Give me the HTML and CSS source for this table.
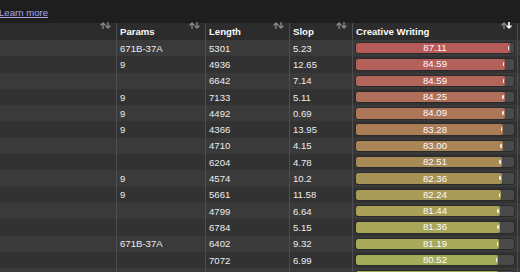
FILE: index.html
```html
<!DOCTYPE html>
<html>
<head>
<meta charset="utf-8">
<link rel="stylesheet" href="styles.css">
</head>
<body>
<div class="top"><a class="learn" href="#">Learn more</a></div>
<div class="table">
  <div class="hcell"><span class="hlabel"></span><svg class="sort" viewBox="0 0 11 7" width="11" height="7"><path d="M3 7V1M1 3L3 1L5 3" class="up"/><path d="M8 0V6M6 4L8 6L10 4" class="down"/></svg></div>
  <div class="hcell"><span class="hlabel">Params</span><svg class="sort" viewBox="0 0 11 7" width="11" height="7"><path d="M3 7V1M1 3L3 1L5 3" class="up"/><path d="M8 0V6M6 4L8 6L10 4" class="down"/></svg></div>
  <div class="hcell"><span class="hlabel">Length</span><svg class="sort" viewBox="0 0 11 7" width="11" height="7"><path d="M3 7V1M1 3L3 1L5 3" class="up"/><path d="M8 0V6M6 4L8 6L10 4" class="down"/></svg></div>
  <div class="hcell"><span class="hlabel">Slop</span><svg class="sort" viewBox="0 0 11 7" width="11" height="7"><path d="M3 7V1M1 3L3 1L5 3" class="up"/><path d="M8 0V6M6 4L8 6L10 4" class="down"/></svg></div>
  <div class="hcell"><span class="hlabel">Creative Writing</span><svg class="sort" viewBox="0 0 11 7" width="11" height="7"><path d="M3 7V1M1 3L3 1L5 3" class="up"/><path d="M8 0V6M6 4L8 6L10 4" class="down active"/></svg></div>
  <div class="hcell last"></div>
</div>
<div class="table body" id="body"></div>
<script>
var rows=[
["671B-37A","5301","5.23","87.11",97.5,"#b75a5a"],
["9","4936","12.65","84.59",94.6,"#b5605b"],
["","6642","7.14","84.59",94.6,"#b2665b"],
["9","7133","5.11","84.25",94.2,"#b06f5b"],
["9","4492","0.69","84.09",94.1,"#ae7659"],
["9","4366","13.95","83.28",93.1,"#ab7d57"],
["","4710","4.15","83.00",92.8,"#a98456"],
["","6204","4.78","82.51",92.2,"#a88a56"],
["9","4574","10.2","82.36",92.1,"#a79256"],
["9","5661","11.58","82.24",91.9,"#a89a57"],
["","4799","6.64","81.44",91.0,"#a8a157"],
["","6784","5.15","81.36",91.0,"#a8a659"],
["671B-37A","6402","9.32","81.19",90.7,"#a7aa59"],
["","7072","6.99","80.52",90.0,"#a3ad59"],
["","","","",89.9,"#a0ae5a"]
];
var b=document.getElementById('body');
var h='';
rows.forEach(function(r,i){
  var c=i%2===0?'odd':'even';
  h+='<div class="cell '+c+'"></div>';
  h+='<div class="cell '+c+'">'+r[0]+'</div>';
  h+='<div class="cell '+c+'">'+r[1]+'</div>';
  h+='<div class="cell '+c+'">'+r[2]+'</div>';
  h+='<div class="cell barcell '+c+'"><div class="track"><div class="fill" style="width:'+r[4]+'%;background:'+r[5]+'"></div><span class="val">'+r[3]+'</span></div></div>';
  h+='<div class="cell last '+c+'"></div>';
});
b.innerHTML=h;
</script>
</body>
</html>
```
FILE: styles.css
```css
html, body {
  margin: 0;
  padding: 0;
  background: #1e1e1e;
  overflow: hidden;
  width: 520px;
  height: 272px;
  font-family: "Liberation Sans", Arial, sans-serif;
  font-size: 9.6px;
  color: #ededed;
}
.top {
  height: 23px;
  box-sizing: border-box;
  padding-top: 7px;
  line-height: 12px;
}
.learn {
  color: #aaa4ea;
  text-decoration: underline;
  margin-left: -1px;
}
.table {
  display: grid;
  grid-template-columns: 117px 89px 84px 63px 165px 1fr;
}
.hcell {
  height: 17px;
  box-sizing: border-box;
  background: #2c2c2c;
  border-right: 1px solid #4e4e4e;
  padding: 3px 5px 0 3px;
  display: flex;
  justify-content: space-between;
  align-items: flex-start;
  line-height: 12px;
  font-weight: bold;
  color: #fafafa;
}
.hcell.last { border-right: none; }
.sort {
  margin-top: -4px;
  flex: none;
}
.sort path {
  fill: none;
  stroke: #8a8a8a;
  stroke-width: 1.3;
  stroke-linecap: round;
  stroke-linejoin: round;
}
.sort path.active { stroke: #ffffff; stroke-width: 1.6; }
.cell {
  height: 16.3px;
  box-sizing: border-box;
  border-right: 1px solid #4e4e4e;
  padding: 1px 3px 0 3px;
  display: flex;
  align-items: center;
  line-height: 12px;
  white-space: nowrap;
}
.cell.last { border-right: none; }
.odd { background: #3a3a3a; }
.even { background: #323232; }
.barcell {
  padding: 0 2px;
}
.track {
  width: 100%;
  height: 12.4px;
  box-sizing: border-box;
  background: #4a4a4a;
  border: 1px solid #2a2a2a;
  border-radius: 3px;
  display: grid;
  overflow: hidden;
}
.fill {
  grid-area: 1 / 1;
  height: 100%;
  border-radius: 2px;
  position: relative;
}
.fill::after {
  content: "";
  position: absolute;
  right: 1px;
  top: 3px;
  width: 1.5px;
  height: 4px;
  background: rgba(255,255,255,0.85);
  border-radius: 1px;
}
.val {
  grid-area: 1 / 1;
  justify-self: center;
  align-self: center;
  position: relative;
  z-index: 1;
  line-height: 10px;
  color: #fbfbfb;
  font-size: 9.6px;
}
```
